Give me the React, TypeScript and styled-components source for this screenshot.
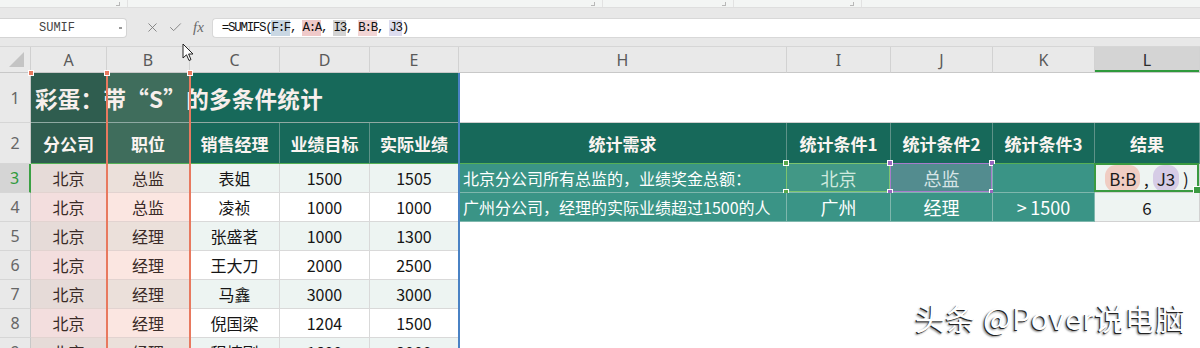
import React from 'react';
import styled, { createGlobalStyle, css } from 'styled-components';
import { X, Check } from 'lucide-react';

const GlobalStyle = createGlobalStyle`
  * { box-sizing: border-box; }
  body {
    margin: 0;
    background: #fff;
    font-family: "Noto Sans CJK SC", "Noto Sans", sans-serif;
  }
`;

const Page = styled.div`
  position: relative;
  width: 1200px;
  height: 348px;
  overflow: hidden;
  background: #fff;
`;

const TopStrip = styled.div`
  height: 8px;
  display: flex;
  background: #f3f5f4;
  border-bottom: 1px solid #dedede;
`;

const Segment = styled.div<{ $w: number }>`
  position: relative;
  width: ${(p) => p.$w}px;
  height: 100%;
  border-right: 1px solid #e2e2e2;

  &::after {
    content: '';
    position: absolute;
    right: 7px;
    bottom: 1px;
    width: 3px;
    height: 3px;
    border-right: 1px solid #b8b8b8;
    border-bottom: 1px solid #b8b8b8;
  }
`;

const FormulaBar = styled.div`
  height: 39px;
  display: flex;
  align-items: center;
  padding-top: 1px;
  background: #e8e8e8;
  border-bottom: 1px solid #d6d6d6;
`;

const NameBox = styled.div`
  position: relative;
  width: 127px;
  height: 20px;
  display: flex;
  align-items: center;
  justify-content: center;
  padding-right: 12px;
  background: #fff;
  border: 1px solid #d4d4d4;
  border-left: none;
  border-radius: 0 4px 4px 0;
  font-family: "Liberation Mono", monospace;
  font-size: 12px;
  color: #444;

  &::after {
    content: '';
    position: absolute;
    right: 4px;
    top: 8px;
    width: 3px;
    height: 2px;
    background: #999;
  }
`;

const BarIcons = styled.div`
  display: flex;
  align-items: center;
  gap: 8px;
  padding: 0 8px 0 18px;
  color: #7a7a7a;
`;

const Fx = styled.span`
  font-family: "Liberation Serif", serif;
  font-style: italic;
  font-size: 15px;
  color: #6a6a6a;
  margin-left: 2px;
`;

const FormulaInput = styled.div`
  flex: 1;
  height: 20px;
  display: flex;
  align-items: center;
  padding-left: 9px;
  background: #fff;
  border: 1px solid #d8d8d8;
  border-right: none;
  border-radius: 4px 0 0 4px;
  font-family: "Liberation Mono", monospace;
  font-size: 12.5px;
  letter-spacing: -1.3px;
  color: #111;
`;

const Ref = styled.span<{ $bg: string }>`
  background: ${(p) => p.$bg};
  padding: 1px 0;
`;

const SheetWrap = styled.div`
  position: relative;
`;

const Sheet = styled.div`
  display: grid;
  grid-template-columns: 31px 76px 83px 90px 90px 89px 328px 104px 102px 102px 105px;
  grid-template-rows: 26px 50px 41px repeat(7, 29px);
`;

const Corner = styled.div`
  display: flex;
  align-items: flex-end;
  justify-content: flex-end;
  padding: 0 6px 5px 0;
  background: #e9e9e9;
  border-right: 1px solid #d0d0d0;
  border-bottom: 1px solid #c8c8c8;

  &::before {
    content: '';
    width: 0;
    height: 0;
    border-left: 15px solid transparent;
    border-bottom: 15px solid #c4c4c4;
  }
`;

const ColHead = styled.div<{ $active?: boolean }>`
  display: flex;
  align-items: center;
  justify-content: center;
  background: #e9e9e9;
  border-right: 1px solid #d2d2d2;
  border-bottom: 1px solid #c8c8c8;
  font-family: "Noto Sans", sans-serif;
  font-size: 16px;
  color: #5a5a5a;
  ${(p) =>
    p.$active &&
    css`
      background: #d4d4d4;
      color: #2c2c2c;
      box-shadow: inset 0 -2px 0 #2f9a3c;
    `}
`;

const RowHead = styled.div<{ $active?: boolean }>`
  display: flex;
  align-items: center;
  justify-content: center;
  background: #e9e9e9;
  border-right: 1px solid #c8c8c8;
  border-bottom: 1px solid #d6d6d6;
  font-family: "Noto Sans", sans-serif;
  font-size: 16px;
  color: #666;
  ${(p) =>
    p.$active &&
    css`
      background: #d5d5d5;
      color: #2f9a3c;
      border-right: 2px solid #3aa043;
    `}
`;

const Title = styled.div`
  grid-column: span 5;
  display: flex;
  align-items: center;
  padding-left: 4px;
  background: linear-gradient(to right, #2f5d4f 0 76px, #3f6d5c 76px 159px, #17695a 159px);
  border-bottom: 1px solid #8fa9a2;
  font-size: 22.5px;
  font-weight: 700;
  color: #f7efec;
  letter-spacing: 0.3px;
`;

const Blank = styled.div<{ $span: number; $edge?: boolean }>`
  grid-column: span ${(p) => p.$span};
  background: #fff;
  border-left: ${(p) => (p.$edge ? '1px solid #a8d8a8' : 'none')};
  border-bottom: ${(p) => (p.$edge ? '1px solid #cfcfcf' : 'none')};
`;

const Head = styled.div<{ $bg?: string }>`
  display: flex;
  align-items: center;
  justify-content: center;
  background: ${(p) => p.$bg || '#17695a'};
  border-right: 1px solid #5e9288;
  border-bottom: 1px solid #55b055;
  font-size: 17px;
  font-weight: 700;
  color: #fbf4f1;
  white-space: nowrap;
`;

const Cell = styled.div<{ $bg: string; $fg?: string; $line?: string; $left?: boolean; $size?: number }>`
  position: relative;
  display: flex;
  align-items: center;
  justify-content: ${(p) => (p.$left ? 'flex-start' : 'center')};
  padding-left: ${(p) => (p.$left ? '4px' : '0')};
  background: ${(p) => p.$bg};
  border-right: 1px solid ${(p) => p.$line || '#d9d9d9'};
  border-bottom: 1px solid ${(p) => p.$line || '#d9d9d9'};
  font-size: ${(p) => p.$size || 16}px;
  color: ${(p) => p.$fg || '#1a1a1a'};
  white-space: nowrap;
`;

const Active = styled.div`
  position: absolute;
  inset: -1px 0 0 -1px;
  border: 2px solid #3a9a40;
  pointer-events: none;

  &::after {
    content: '';
    position: absolute;
    right: -4px;
    bottom: -4px;
    width: 6px;
    height: 6px;
    background: #3a9a40;
    border: 1px solid #fff;
  }
`;

const RefFrame = styled.div<{ $c: string }>`
  position: absolute;
  inset: -1px 0 0 -1px;
  border: 1px solid ${(p) => p.$c};
  pointer-events: none;
`;

const Knob = styled.span<{ $c: string; $x: 'l' | 'r'; $y: 't' | 'b' }>`
  position: absolute;
  width: 6px;
  height: 6px;
  background: ${(p) => p.$c};
  border: 1px solid #fff;
  ${(p) => (p.$x === 'l' ? 'left: -4px;' : 'right: -4px;')}
  ${(p) => (p.$y === 't' ? 'top: -4px;' : 'bottom: -4px;')}
`;

const Pill = styled.span<{ $bg: string }>`
  background: ${(p) => p.$bg};
  border-radius: 11px;
  padding: 1px 4px;
`;

const RangeLine = styled.div<{ $x: number; $c: string; $top: number }>`
  position: absolute;
  left: ${(p) => p.$x}px;
  top: ${(p) => p.$top}px;
  bottom: 0;
  width: 2px;
  background: ${(p) => p.$c};
  pointer-events: none;
`;

const Dot = styled.div<{ $x: number; $c: string }>`
  position: absolute;
  left: ${(p) => p.$x - 3}px;
  top: 23px;
  width: 6px;
  height: 6px;
  background: ${(p) => p.$c};
  border: 1px solid #fff;
`;

const Cursor = styled.svg`
  position: absolute;
  left: 182px;
  top: -4px;
`;

const Watermark = styled.div`
  position: absolute;
  right: 14px;
  bottom: 9px;
  font-size: 30px;
  color: #fff;
  letter-spacing: 0.5px;
  text-shadow: -1px 1px 0 #222, -2px 2px 2px rgba(0, 0, 0, 0.45);
`;

const cols = ['A', 'B', 'C', 'D', 'E', 'H', 'I', 'J', 'K', 'L'];

const data = [
  ['北京', '总监', '表姐', '1500', '1505'],
  ['北京', '总监', '凌祯', '1000', '1000'],
  ['北京', '经理', '张盛茗', '1000', '1300'],
  ['北京', '经理', '王大刀', '2000', '2500'],
  ['北京', '经理', '马鑫', '3000', '3000'],
  ['北京', '经理', '倪国梁', '1204', '1500'],
  ['北京', '经理', '程楠刚', '1600', '2000'],
];

const leftBg = (col: number, odd: boolean) => {
  if (col === 0) return odd ? '#e6dbd8' : '#f3dede';
  if (col === 1) return odd ? '#ebe0da' : '#fbe6e1';
  return odd ? '#edf4f2' : '#ffffff';
};

const TEAL = '#3a9486';
const TEAL_LINE = '#7fb7ad';

const Handles = ({ c }: { c: string }) => (
  <>
    <Knob $c={c} $x="l" $y="t" />
    <Knob $c={c} $x="r" $y="t" />
    <Knob $c={c} $x="l" $y="b" />
    <Knob $c={c} $x="r" $y="b" />
  </>
);

export default function App() {
  return (
    <Page>
      <GlobalStyle />
      <TopStrip>
        <Segment $w={128} />
        <Segment $w={475} />
        <Segment $w={131} />
        <Segment $w={128} />
      </TopStrip>

      <FormulaBar>
        <NameBox>SUMIF</NameBox>
        <BarIcons>
          <X size={15} strokeWidth={1.4} />
          <Check size={15} strokeWidth={1.4} />
          <Fx>fx</Fx>
        </BarIcons>
        <FormulaInput>
          =SUMIFS(<Ref $bg="#c9d7e3">F:F</Ref>,&nbsp;<Ref $bg="#efc9c9">A:A</Ref>,&nbsp;
          <Ref $bg="#d3d3d3">I3</Ref>,&nbsp;<Ref $bg="#f1d4d4">B:B</Ref>,&nbsp;
          <Ref $bg="#dcdcef">J3</Ref>)
        </FormulaInput>
      </FormulaBar>

      <SheetWrap>
        <Sheet>
          <Corner />
          {cols.map((c) => (
            <ColHead key={c} $active={c === 'L'}>
              {c}
            </ColHead>
          ))}

          <RowHead>1</RowHead>
          <Title>彩蛋：带“S”的多条件统计</Title>
          <Blank $span={5} $edge />

          <RowHead>2</RowHead>
          <Head $bg="#2f5d4f">分公司</Head>
          <Head $bg="#3f6d5c">职位</Head>
          <Head>销售经理</Head>
          <Head>业绩目标</Head>
          <Head>实际业绩</Head>
          <Head>统计需求</Head>
          <Head>统计条件1</Head>
          <Head>统计条件2</Head>
          <Head>统计条件3</Head>
          <Head>结果</Head>

          {data.map((row, i) => {
            const odd = i % 2 === 0;
            const n = i + 3;
            return (
              <React.Fragment key={n}>
                <RowHead $active={n === 3}>{n}</RowHead>
                {row.map((v, c) => (
                  <Cell
                    key={c}
                    $bg={leftBg(c, odd)}
                    $fg={c < 2 ? '#3a2b28' : '#151515'}
                    $line={c < 2 ? '#e2d3d0' : '#d9d9d9'}
                  >
                    {v}
                  </Cell>
                ))}
                {n === 3 && (
                  <>
                    <Cell $bg={TEAL} $fg="#fff" $line={TEAL_LINE} $left>
                      北京分公司所有总监的，业绩奖金总额：
                    </Cell>
                    <Cell $bg="#429886" $fg="#cfe9de" $line={TEAL_LINE} $size={18}>
                      北京
                      <RefFrame $c="#7cc46e">
                        <Handles c="#5aa84c" />
                      </RefFrame>
                    </Cell>
                    <Cell $bg="#538c8f" $fg="#d6e4e6" $line={TEAL_LINE} $size={18}>
                      总监
                      <RefFrame $c="#a77bcb">
                        <Handles c="#9a66c0" />
                      </RefFrame>
                    </Cell>
                    <Cell $bg={TEAL} $line={TEAL_LINE} />
                    <Cell $bg="#eef4f2" $line="#d2d2d2" $size={17}>
                      <Pill $bg="#f0cdc3">B:B</Pill>&nbsp;,&nbsp;<Pill $bg="#d6cce6">J3</Pill>&nbsp;)
                      <Active />
                    </Cell>
                  </>
                )}
                {n === 4 && (
                  <>
                    <Cell $bg={TEAL} $fg="#fff" $line={TEAL_LINE} $left>
                      广州分公司，经理的实际业绩超过1500的人
                    </Cell>
                    <Cell $bg={TEAL} $fg="#fff" $line={TEAL_LINE} $size={18}>
                      广州
                    </Cell>
                    <Cell $bg={TEAL} $fg="#fff" $line={TEAL_LINE} $size={18}>
                      经理
                    </Cell>
                    <Cell $bg={TEAL} $fg="#fff" $line={TEAL_LINE} $size={18}>
                      &gt;&thinsp;1500
                    </Cell>
                    <Cell $bg="#eef4f2" $line="#d2d2d2" $size={17}>
                      6
                    </Cell>
                  </>
                )}
                {n > 4 && <Blank $span={5} />}
              </React.Fragment>
            );
          })}
        </Sheet>

        <RangeLine $x={106} $top={26} $c="#e8795f" />
        <RangeLine $x={189} $top={26} $c="#e8795f" />
        <RangeLine $x={458} $top={26} $c="#4a82c4" />
        <Dot $x={31} $c="#e8795f" />
        <Dot $x={107} $c="#e8795f" />
        <Dot $x={190} $c="#e8795f" />

        <Cursor width="12" height="19" viewBox="0 0 12 19">
          <path d="M1 1 L1 15 L4.5 11.8 L7 17.5 L9 16.6 L6.6 11 L11 11 Z" fill="#fff" stroke="#222" strokeWidth="1" strokeLinejoin="round" />
        </Cursor>
      </SheetWrap>

      <Watermark>头条 @Pover说电脑</Watermark>
    </Page>
  );
}
